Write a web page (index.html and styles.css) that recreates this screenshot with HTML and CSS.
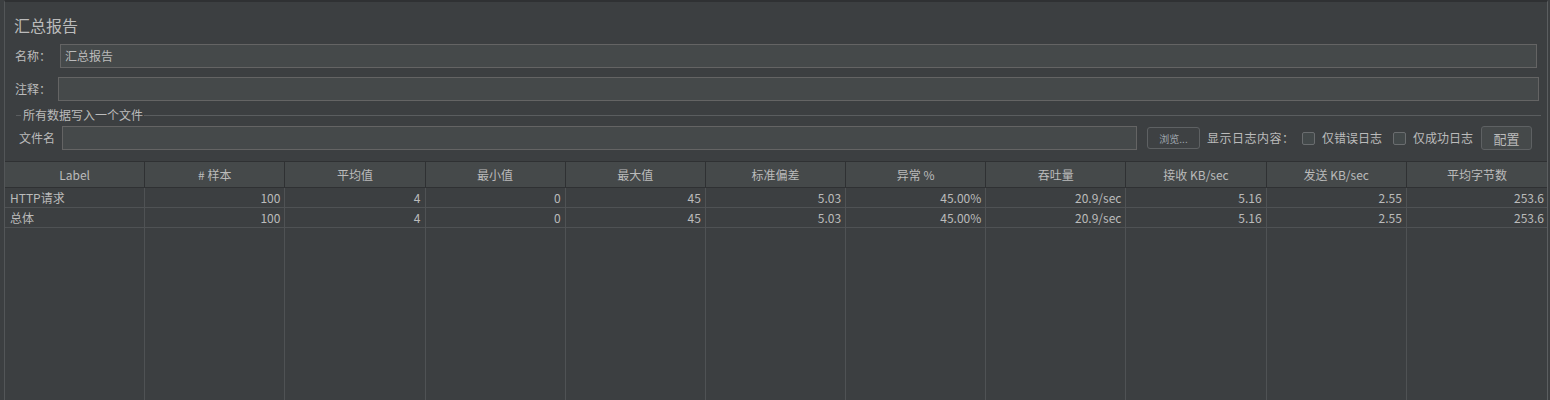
FILE: index.html
```html
<!DOCTYPE html>
<html lang="zh-CN">
<head>
<meta charset="utf-8">
<title>汇总报告</title>
<link rel="stylesheet" href="styles.css">
</head>
<body>
<div class="panel">
  <div class="title">汇总报告</div>
  <div class="row row-name">
    <span class="label label-name">名称：</span>
    <div class="input input-name">汇总报告</div>
  </div>
  <div class="row row-comment">
    <span class="label label-comment">注释：</span>
    <div class="input input-comment"></div>
  </div>
  <div class="legend-row">
    <span class="rule rule-short"></span>
    <span class="legend">所有数据写入一个文件</span>
    <span class="rule rule-long"></span>
  </div>
  <div class="row row-file">
    <span class="label label-file">文件名</span>
    <div class="input input-file"></div>
    <div class="btn btn-browse">浏览...</div>
    <span class="text log-label">显示日志内容：</span>
    <span class="check"></span>
    <span class="text check-text check-error">仅错误日志</span>
    <span class="check"></span>
    <span class="text check-text check-success">仅成功日志</span>
    <div class="btn btn-config">配置</div>
  </div>
  <div class="table">
    <div class="tr thead">
      <div class="th">Label</div>
      <div class="th"># 样本</div>
      <div class="th">平均值</div>
      <div class="th">最小值</div>
      <div class="th">最大值</div>
      <div class="th">标准偏差</div>
      <div class="th">异常 %</div>
      <div class="th">吞吐量</div>
      <div class="th">接收 KB/sec</div>
      <div class="th">发送 KB/sec</div>
      <div class="th">平均字节数</div>
    </div>
    <div class="tr trow">
      <div class="td td-text">HTTP请求</div>
      <div class="td">100</div>
      <div class="td">4</div>
      <div class="td">0</div>
      <div class="td">45</div>
      <div class="td">5.03</div>
      <div class="td">45.00%</div>
      <div class="td">20.9/sec</div>
      <div class="td">5.16</div>
      <div class="td">2.55</div>
      <div class="td">253.6</div>
    </div>
    <div class="tr trow">
      <div class="td td-text">总体</div>
      <div class="td">100</div>
      <div class="td">4</div>
      <div class="td">0</div>
      <div class="td">45</div>
      <div class="td">5.03</div>
      <div class="td">45.00%</div>
      <div class="td">20.9/sec</div>
      <div class="td">5.16</div>
      <div class="td">2.55</div>
      <div class="td">253.6</div>
    </div>
    <div class="tr tfill">
      <div class="tf"></div><div class="tf"></div><div class="tf"></div><div class="tf"></div>
      <div class="tf"></div><div class="tf"></div><div class="tf"></div><div class="tf"></div>
      <div class="tf"></div><div class="tf"></div><div class="tf"></div>
    </div>
  </div>
</div>
</body>
</html>
```

FILE: styles.css
```css
html, body {
  margin: 0;
  padding: 0;
}
body {
  width: 1550px;
  height: 400px;
  overflow: hidden;
  background: #3c3f41;
  font-family: "Noto Sans CJK SC", "Liberation Sans", sans-serif;
  font-size: 12px;
  color: #bbbbbb;
}
.panel {
  box-sizing: border-box;
  margin-left: 4px;
  width: 1544px;
  height: 400px;
  border-top: 2px solid #2f3133;
  border-left: 1px solid #535658;
  border-right: 1px solid #5b5e60;
  display: flex;
  flex-direction: column;
}
.title {
  margin-top: 12px;
  padding-left: 9px;
  font-size: 16px;
  line-height: 22px;
  height: 22px;
  color: #bbbbbb;
}
.row {
  display: flex;
  align-items: center;
  height: 24px;
}
.row-name { margin-top: 8px; padding-left: 10px; padding-right: 10px; }
.row-comment { margin-top: 9px; padding-left: 10px; padding-right: 8px; }
.row-file { margin-top: 4px; padding-left: 14px; padding-right: 15px; }
.label {
  flex: none;
  line-height: 24px;
}
.label-name { width: 45px; }
.label-comment { width: 43px; }
.label-file { width: 43px; }
.input {
  box-sizing: border-box;
  flex: 1;
  height: 24px;
  background: #45494a;
  border: 1px solid #646464;
  padding-left: 4px;
  line-height: 22px;
  color: #bbbbbb;
}
.legend-row {
  display: flex;
  align-items: center;
  height: 14px;
  margin-top: 7px;
  padding-left: 11px;
  padding-right: 6px;
}
.rule {
  height: 1px;
  background: #5a5d5f;
}
.rule-short { width: 5px; flex: none; }
.rule-long { flex: 1; }
.legend {
  padding: 0 1px 0 1px;
  line-height: 14px;
  margin-left: 1px;
}
.btn {
  box-sizing: border-box;
  flex: none;
  border: 1px solid #5e6163;
  border-radius: 3px;
  display: flex;
  align-items: center;
  justify-content: center;
}
.btn-browse {
  width: 53px;
  height: 22px;
  margin-left: 10px;
  font-size: 10px;
  color: #9fa6ad;
  background: #3e4143;
}
.btn-config {
  width: 51px;
  height: 24px;
  margin-left: 8px;
  font-size: 13px;
  color: #bbbbbb;
  background: #45494a;
}
.text { flex: none; line-height: 24px; }
.log-label { margin-left: 7px; width: 95px; letter-spacing: 0.5px; }
.check {
  box-sizing: border-box;
  flex: none;
  width: 13px;
  height: 13px;
  border: 1px solid #6a6d6f;
  border-radius: 2px;
  background: #43494a;
  margin-right: 7px;
}
.check-error { width: 71px; }
.check-success { width: 60px; }
.table {
  margin-top: 11px;
  flex: 1;
  display: flex;
  flex-direction: column;
  border-top: 1px solid #2f3133;
}
.tr {
  display: grid;
  grid-template-columns: repeat(11, 1fr);
}
.thead {
  height: 26px;
  box-sizing: border-box;
  background: #45494a;
  border-bottom: 1px solid #2f3133;
}
.th {
  border-right: 1px solid #2f3133;
  text-align: center;
  line-height: 25px;
  color: #bbbbbb;
  white-space: nowrap;
}
.th:last-child { border-right: none; }
.trow {
  height: 20px;
  box-sizing: border-box;
  border-bottom: 1px solid #4f5254;
}
.td {
  border-right: 1px solid #4f5254;
  text-align: right;
  padding-right: 4px;
  line-height: 19px;
  white-space: nowrap;
  color: #bbbbbb;
}
.td:last-child { border-right: none; padding-right: 3px; }
.td-text { text-align: left; padding-left: 5px; }
.tfill { flex: 1; }
.tf { border-right: 1px solid #4f5254; }
.tf:last-child { border-right: none; }
```
